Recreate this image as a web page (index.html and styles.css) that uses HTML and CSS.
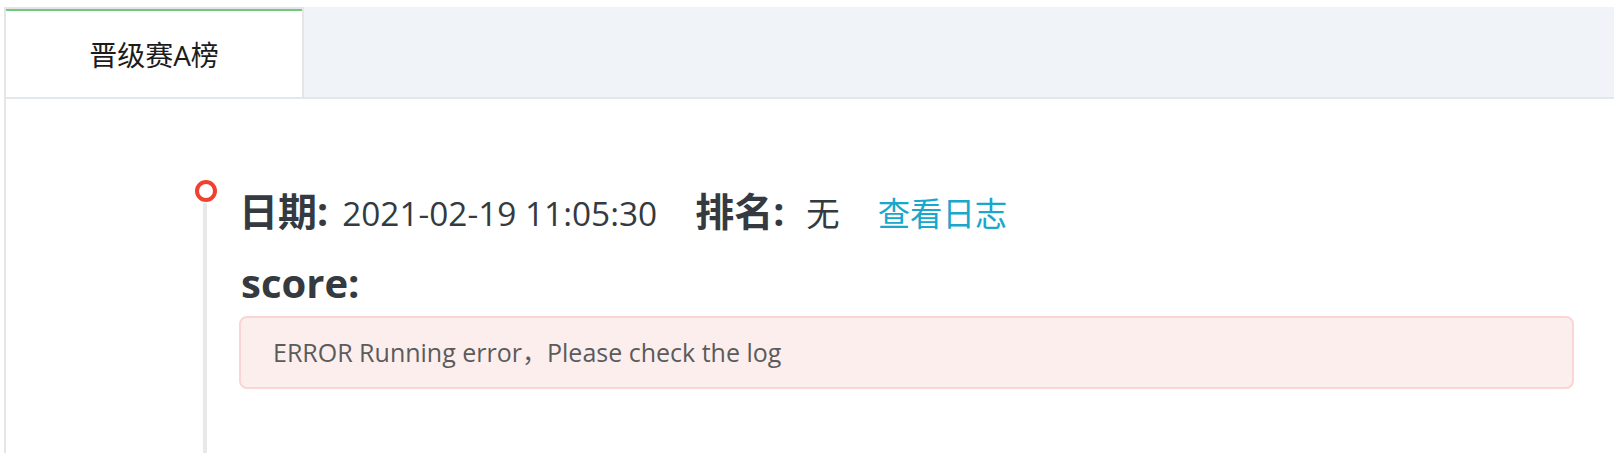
FILE: index.html
```html
<!DOCTYPE html>
<html lang="zh-CN">
<head>
<meta charset="utf-8">
<title>晋级赛A榜</title>
<link rel="stylesheet" href="styles.css">
</head>
<body>
<div class="page">
  <div class="card">
    <div class="tabs-header">
      <div class="tab is-active">晋级赛A榜</div>
    </div>
    <div class="tabs-content">
      <div class="timeline-item">
        <div class="timeline-dot"></div>
        <div class="timeline-tail"></div>
        <div class="timeline-body">
          <div class="info-row">
            <span class="label">日期:</span>
            <span class="value value-date">2021-02-19 11:05:30</span>
            <span class="label label-rank">排名:</span>
            <span class="value value-rank">无</span>
            <a class="log-link">查看日志</a>
          </div>
          <div class="score-row">
            <span class="label label-score">score:</span>
          </div>
          <div class="alert-error">ERROR Running error，Please check the log</div>
        </div>
      </div>
    </div>
  </div>
</div>
</body>
</html>
```

FILE: styles.css
```css
html, body {
  margin: 0;
  height: 100%;
  overflow: hidden;
  background: #ffffff;
}

body {
  font-family: "Open Sans", "Noto Sans CJK SC", sans-serif;
  color: #343a40;
}

.page {
  padding: 7px 0 0 4px;
  height: 100%;
  box-sizing: border-box;
}

.card {
  display: flex;
  flex-direction: column;
  border-left: 2px solid #e5e5e5;
  height: 100%;
  box-sizing: border-box;
}

.tabs-header {
  display: flex;
  background: #f0f3f8;
  border-bottom: 2px solid #e2e7ec;
}

.tab {
  width: 296px;
  height: 84px;
  box-sizing: content-box;
  padding-top: 4px;
  border-top: 2px solid #e5e5e5;
  border-right: 2px solid #e5e5e5;
  background: #ffffff;
  box-shadow: inset 0 2px 0 #70c97c;
  display: flex;
  align-items: center;
  justify-content: center;
  font-size: 28px;
  line-height: 1;
  color: #1c1c1c;
}

.tabs-content {
  flex: 1;
  display: flex;
  flex-direction: column;
  padding: 74px 40px 0 189px;
}

.timeline-item {
  flex: 1;
  position: relative;
  padding-left: 44px;
}

.timeline-dot {
  position: absolute;
  left: 0;
  top: 7px;
  width: 14px;
  height: 14px;
  border: 4px solid #f2402f;
  border-radius: 50%;
  background: #ffffff;
}

.timeline-tail {
  position: absolute;
  left: 8px;
  top: 30px;
  bottom: 0;
  width: 4px;
  background: #e8e8e8;
}

.info-row {
  display: flex;
  align-items: baseline;
  margin-top: 15px;
  font-size: 33.4px;
  line-height: 46px;
}

.label {
  font-weight: 700;
  font-size: 39px;
  line-height: 46px;
  color: #343a40;
}

.value {
  color: #343a40;
}

.value-date {
  margin-left: 14px;
}

.label-rank {
  margin-left: 38px;
}

.value-rank {
  margin-left: 22px;
}

.log-link {
  margin-left: 38px;
  font-size: 32.4px;
  color: #19a7cc;
  cursor: pointer;
}

.score-row {
  margin-top: 24px;
  line-height: 46px;
}

.label-score {
  display: inline-block;
  margin-left: 2px;
  font-size: 40px;
}

.alert-error {
  margin-top: 1px;
  padding: 15px 32px 16px;
  border: 2px solid #f9d5d5;
  border-radius: 8px;
  background: #fdeeee;
  color: #5b5b5b;
  font-size: 25px;
  line-height: 38px;
}
```
